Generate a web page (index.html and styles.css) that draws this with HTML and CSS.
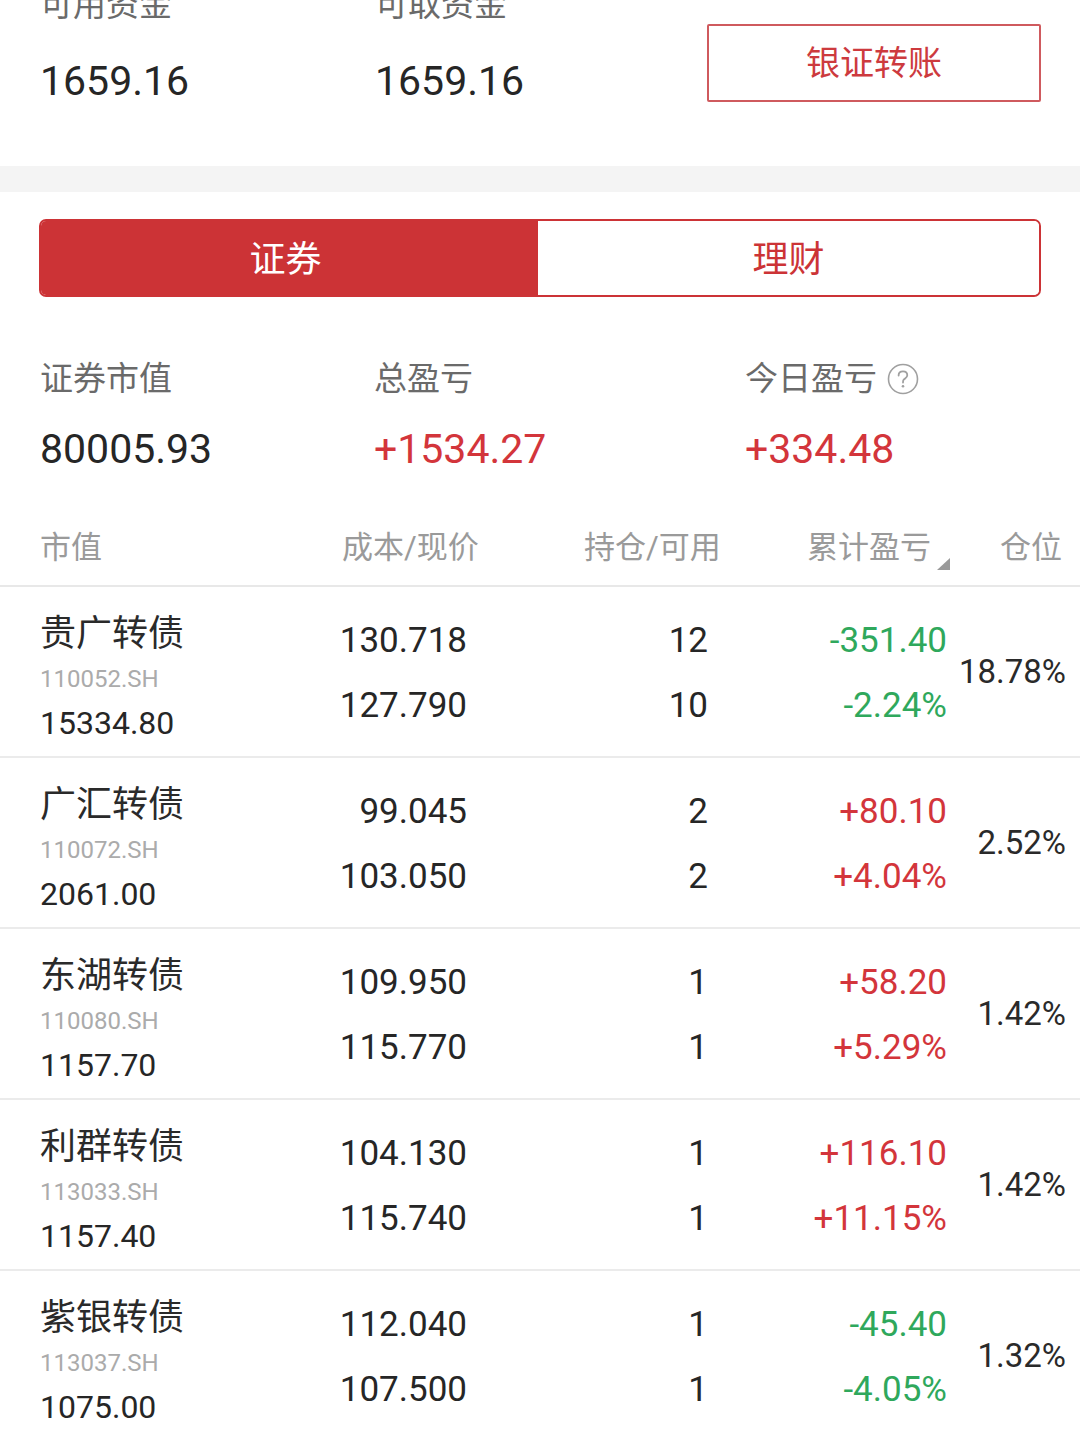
FILE: index.html
```html
<!DOCTYPE html>
<html lang="zh-CN">
<head>
<meta charset="utf-8">
<title>持仓</title>
<link rel="stylesheet" href="styles.css">
</head>
<body>
<div class="page">
  <section class="funds">
    <div class="fund fund-a">
      <div class="label">可用资金</div>
      <div class="big">1659.16</div>
    </div>
    <div class="fund fund-b">
      <div class="label">可取资金</div>
      <div class="big">1659.16</div>
    </div>
    <button class="transfer">银证转账</button>
  </section>

  <div class="band"></div>

  <div class="tabs">
    <div class="tab active">证券</div>
    <div class="tab">理财</div>
  </div>

  <section class="summary">
    <div class="sum s1">
      <div class="label">证券市值</div>
      <div class="big">80005.93</div>
    </div>
    <div class="sum s2">
      <div class="label">总盈亏</div>
      <div class="big red">+1534.27</div>
    </div>
    <div class="sum s3">
      <div class="label">今日盈亏<svg class="help" viewBox="0 0 32 32" width="32" height="32"><circle cx="16" cy="16" r="14.5" fill="none" stroke="#a0a0a0" stroke-width="1.6"/><path d="M11.6 12.6 C11.6 9.9 13.6 8.4 16 8.4 C18.5 8.4 20.3 10 20.3 12.2 C20.3 14.6 17.9 15.2 16.6 16.8 C16.1 17.5 16 18.3 16 19.6" fill="none" stroke="#a0a0a0" stroke-width="1.8" stroke-linecap="round"/><circle cx="16" cy="23.2" r="1.3" fill="#a0a0a0"/></svg></div>
      <div class="big red">+334.48</div>
    </div>
  </section>

  <div class="thead">
    <div>市值</div>
    <div>成本/现价</div>
    <div>持仓/可用</div>
    <div class="sortable">累计盈亏<span class="tri"></span></div>
    <div>仓位</div>
  </div>

  <div class="rows">
    <div class="row">
      <div class="c1"><div class="name">贵广转债</div><div class="code">110052.SH</div><div class="mv">15334.80</div></div>
      <div class="c2"><div>130.718</div><div>127.790</div></div>
      <div class="c3"><div>12</div><div>10</div></div>
      <div class="c4 green"><div>-351.40</div><div>-2.24%</div></div>
      <div class="c5">18.78%</div>
    </div>
    <div class="row">
      <div class="c1"><div class="name">广汇转债</div><div class="code">110072.SH</div><div class="mv">2061.00</div></div>
      <div class="c2"><div>99.045</div><div>103.050</div></div>
      <div class="c3"><div>2</div><div>2</div></div>
      <div class="c4 red"><div>+80.10</div><div>+4.04%</div></div>
      <div class="c5">2.52%</div>
    </div>
    <div class="row">
      <div class="c1"><div class="name">东湖转债</div><div class="code">110080.SH</div><div class="mv">1157.70</div></div>
      <div class="c2"><div>109.950</div><div>115.770</div></div>
      <div class="c3"><div>1</div><div>1</div></div>
      <div class="c4 red"><div>+58.20</div><div>+5.29%</div></div>
      <div class="c5">1.42%</div>
    </div>
    <div class="row">
      <div class="c1"><div class="name">利群转债</div><div class="code">113033.SH</div><div class="mv">1157.40</div></div>
      <div class="c2"><div>104.130</div><div>115.740</div></div>
      <div class="c3"><div>1</div><div>1</div></div>
      <div class="c4 red"><div>+116.10</div><div>+11.15%</div></div>
      <div class="c5">1.42%</div>
    </div>
    <div class="row">
      <div class="c1"><div class="name">紫银转债</div><div class="code">113037.SH</div><div class="mv">1075.00</div></div>
      <div class="c2"><div>112.040</div><div>107.500</div></div>
      <div class="c3"><div>1</div><div>1</div></div>
      <div class="c4 green"><div>-45.40</div><div>-4.05%</div></div>
      <div class="c5">1.32%</div>
    </div>
  </div>
</div>
</body>
</html>
```

FILE: styles.css
```css
* { box-sizing: border-box; }
html, body { margin: 0; padding: 0; background: #fff; }
body {
  font-family: Roboto, "Noto Sans CJK SC", sans-serif;
  color: #262626;
  width: 1080px;
  height: 1439px;
  overflow: hidden;
}
.page { width: 1080px; }

.label {
  font-size: 33px;
  line-height: 44px;
  color: #6a6a6a;
  display: flex;
  align-items: center;
}
.big {
  font-size: 41px;
  line-height: 50px;
  color: #262626;
}
.red { color: #d3353b; }
.green { color: #2fa85c; }

/* funds */
.funds {
  display: flex;
  margin-top: -17px;
  padding: 0 39px 0 40px;
  height: 183px;
}
.fund .big { margin-top: 29px; }
.fund-a { width: 335px; }
.fund-b { flex: 1; }
.transfer {
  margin-top: 41px;
  width: 334px;
  height: 78px;
  border: 2px solid #cf5a5e;
  border-radius: 2px;
  background: #fff;
  color: #cd3a3e;
  font-family: Roboto, "Noto Sans CJK SC", sans-serif;
  font-size: 34px;
  line-height: 40px;
  padding: 0;
}

.band { height: 26px; background: #f4f4f4; }

/* tabs */
.tabs {
  display: flex;
  margin: 27px 39px 0 39px;
  height: 78px;
  border: 2px solid #cc3336;
  border-radius: 7px;
  overflow: hidden;
}
.tab {
  flex: 1;
  display: flex;
  align-items: center;
  justify-content: center;
  font-size: 36px;
  color: #cc3336;
  background: #fff;
  padding-bottom: 4px;
}
.tab.active { background: #cc3336; color: #fff; flex: 0 0 497px; padding-right: 8px; }

/* summary */
.summary {
  display: flex;
  padding: 0 0 0 40px;
  margin-top: 60px;
}
.sum .big { margin-top: 23px; }
.s1 { width: 334px; }
.s2 { width: 371px; }
.s3 { flex: 1; }
.help { width: 32px; height: 32px; margin-left: 10px; }

/* table header */
.thead {
  display: grid;
  grid-template-columns: 302px 242px 223px 193px 1fr;
  padding: 52px 0 15px 40px;
  font-size: 31px;
  line-height: 44px;
  color: #9a9a9a;
  border-bottom: 2px solid #e8e8e8;
}
.sortable { position: relative; }
.tri {
  position: absolute;
  left: 130px;
  top: 32px;
  width: 0; height: 0;
  border-left: 13px solid transparent;
  border-bottom: 12px solid #9a9a9a;
}

/* rows */
.row {
  display: grid;
  grid-template-columns: 260px 167px 241px 240px 118px;
  padding-left: 40px;
  height: 171px;
  border-bottom: 2px solid #ebebeb;
  align-items: center;
}
.c1 { align-self: start; padding-top: 25px; }
.name { font-size: 36px; line-height: 44px; color: #2a2a2a; }
.code { font-size: 24px; line-height: 46px; color: #ababab; }
.mv { font-size: 32px; line-height: 42px; color: #262626; }
.c2, .c3, .c4 {
  text-align: right;
  font-size: 35px;
  line-height: 65px;
  margin-top: 2px;
}
.c4 { padding-right: 1px; }
.c5 {
  text-align: right;
  font-size: 33px;
  line-height: 44px;
  color: #2a2a2a;
}
```
